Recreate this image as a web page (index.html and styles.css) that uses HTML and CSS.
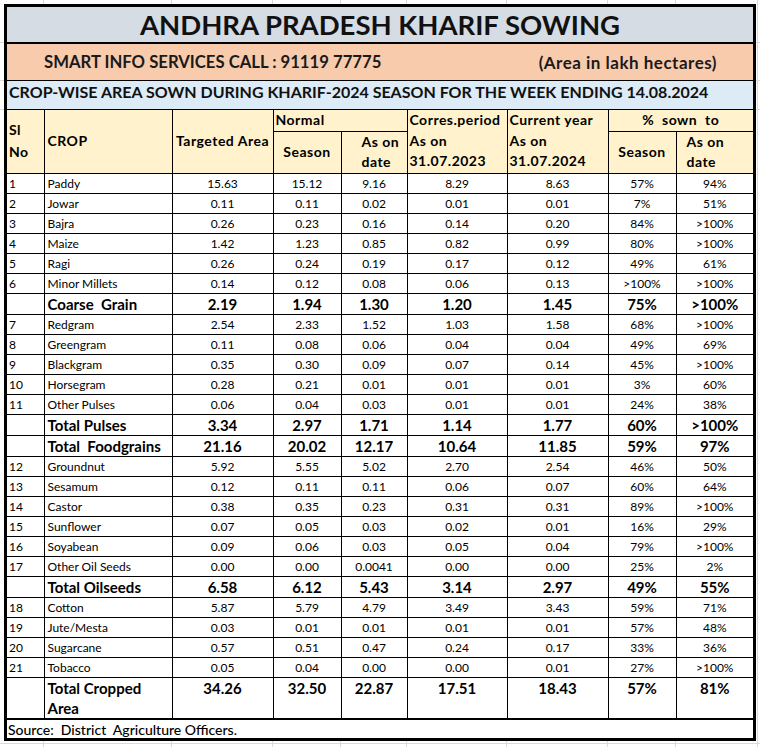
FILE: index.html
```html
<!DOCTYPE html>
<html lang="en">
<head>
<meta charset="utf-8">
<title>Andhra Pradesh Kharif Sowing</title>
<link rel="stylesheet" href="styles.css">
</head>
<body>
<div class="sheet">
  <div class="title">ANDHRA PRADESH KHARIF SOWING</div>
  <div class="info"><span>SMART INFO SERVICES CALL : 91119 77775</span><span class="area">(Area in lakh hectares)</span></div>
  <div class="subtitle">CROP-WISE AREA SOWN DURING KHARIF-2024 SEASON FOR THE WEEK ENDING 14.08.2024</div>
  <table class="grid">
    <colgroup>
      <col class="c-sl"><col class="c-crop"><col class="c-tgt"><col class="c-ns"><col class="c-nd"><col class="c-cor"><col class="c-cur"><col class="c-ps"><col class="c-pd">
    </colgroup>
    <thead>
      <tr class="h1">
        <th rowspan="2" class="left sl">Sl<br>No</th>
        <th rowspan="2" class="left crop">CROP</th>
        <th rowspan="2">Targeted Area</th>
        <th colspan="2" class="left normal">Normal</th>
        <th rowspan="2" class="left top">Corres.period<br>As on<br>31.07.2023</th>
        <th rowspan="2" class="left top">Current year<br>As on<br>31.07.2024</th>
        <th colspan="2">%&nbsp; sown&nbsp; to</th>
      </tr>
      <tr class="h2">
        <th>Season</th>
        <th class="left asd">As on<br>date</th>
        <th>Season</th>
        <th class="left asd2">As on<br>date</th>
      </tr>
    </thead>
    <tbody>
      <tr><td class="sl">1</td><td class="crop">Paddy</td><td>15.63</td><td>15.12</td><td>9.16</td><td>8.29</td><td>8.63</td><td>57%</td><td>94%</td></tr>
      <tr><td class="sl">2</td><td class="crop">Jowar</td><td>0.11</td><td>0.11</td><td>0.02</td><td>0.01</td><td>0.01</td><td>7%</td><td>51%</td></tr>
      <tr><td class="sl">3</td><td class="crop">Bajra</td><td>0.26</td><td>0.23</td><td>0.16</td><td>0.14</td><td>0.20</td><td>84%</td><td>&gt;100%</td></tr>
      <tr><td class="sl">4</td><td class="crop">Maize</td><td>1.42</td><td>1.23</td><td>0.85</td><td>0.82</td><td>0.99</td><td>80%</td><td>&gt;100%</td></tr>
      <tr><td class="sl">5</td><td class="crop">Ragi</td><td>0.26</td><td>0.24</td><td>0.19</td><td>0.17</td><td>0.12</td><td>49%</td><td>61%</td></tr>
      <tr><td class="sl">6</td><td class="crop">Minor Millets</td><td>0.14</td><td>0.12</td><td>0.08</td><td>0.06</td><td>0.13</td><td>&gt;100%</td><td>&gt;100%</td></tr>
      <tr class="total"><td class="sl"></td><td class="crop">Coarse&nbsp; Grain</td><td>2.19</td><td>1.94</td><td>1.30</td><td>1.20</td><td>1.45</td><td>75%</td><td>&gt;100%</td></tr>
      <tr><td class="sl">7</td><td class="crop">Redgram</td><td>2.54</td><td>2.33</td><td>1.52</td><td>1.03</td><td>1.58</td><td>68%</td><td>&gt;100%</td></tr>
      <tr><td class="sl">8</td><td class="crop">Greengram</td><td>0.11</td><td>0.08</td><td>0.06</td><td>0.04</td><td>0.04</td><td>49%</td><td>69%</td></tr>
      <tr><td class="sl">9</td><td class="crop">Blackgram</td><td>0.35</td><td>0.30</td><td>0.09</td><td>0.07</td><td>0.14</td><td>45%</td><td>&gt;100%</td></tr>
      <tr><td class="sl">10</td><td class="crop">Horsegram</td><td>0.28</td><td>0.21</td><td>0.01</td><td>0.01</td><td>0.01</td><td>3%</td><td>60%</td></tr>
      <tr><td class="sl">11</td><td class="crop">Other Pulses</td><td>0.06</td><td>0.04</td><td>0.03</td><td>0.01</td><td>0.01</td><td>24%</td><td>38%</td></tr>
      <tr class="total"><td class="sl"></td><td class="crop">Total Pulses</td><td>3.34</td><td>2.97</td><td>1.71</td><td>1.14</td><td>1.77</td><td>60%</td><td>&gt;100%</td></tr>
      <tr class="total"><td class="sl"></td><td class="crop">Total&nbsp; Foodgrains</td><td>21.16</td><td>20.02</td><td>12.17</td><td>10.64</td><td>11.85</td><td>59%</td><td>97%</td></tr>
      <tr><td class="sl">12</td><td class="crop">Groundnut</td><td>5.92</td><td>5.55</td><td>5.02</td><td>2.70</td><td>2.54</td><td>46%</td><td>50%</td></tr>
      <tr><td class="sl">13</td><td class="crop">Sesamum</td><td>0.12</td><td>0.11</td><td>0.11</td><td>0.06</td><td>0.07</td><td>60%</td><td>64%</td></tr>
      <tr><td class="sl">14</td><td class="crop">Castor</td><td>0.38</td><td>0.35</td><td>0.23</td><td>0.31</td><td>0.31</td><td>89%</td><td>&gt;100%</td></tr>
      <tr><td class="sl">15</td><td class="crop">Sunflower</td><td>0.07</td><td>0.05</td><td>0.03</td><td>0.02</td><td>0.01</td><td>16%</td><td>29%</td></tr>
      <tr><td class="sl">16</td><td class="crop">Soyabean</td><td>0.09</td><td>0.06</td><td>0.03</td><td>0.05</td><td>0.04</td><td>79%</td><td>&gt;100%</td></tr>
      <tr><td class="sl">17</td><td class="crop">Other Oil Seeds</td><td>0.00</td><td>0.00</td><td>0.0041</td><td>0.00</td><td>0.00</td><td>25%</td><td>2%</td></tr>
      <tr class="total"><td class="sl"></td><td class="crop">Total Oilseeds</td><td>6.58</td><td>6.12</td><td>5.43</td><td>3.14</td><td>2.97</td><td>49%</td><td>55%</td></tr>
      <tr><td class="sl">18</td><td class="crop">Cotton</td><td>5.87</td><td>5.79</td><td>4.79</td><td>3.49</td><td>3.43</td><td>59%</td><td>71%</td></tr>
      <tr><td class="sl">19</td><td class="crop">Jute/Mesta</td><td>0.03</td><td>0.01</td><td>0.01</td><td>0.01</td><td>0.01</td><td>57%</td><td>48%</td></tr>
      <tr><td class="sl">20</td><td class="crop">Sugarcane</td><td>0.57</td><td>0.51</td><td>0.47</td><td>0.24</td><td>0.17</td><td>33%</td><td>36%</td></tr>
      <tr><td class="sl">21</td><td class="crop">Tobacco</td><td>0.05</td><td>0.04</td><td>0.00</td><td>0.00</td><td>0.01</td><td>27%</td><td>&gt;100%</td></tr>
      <tr class="total grand"><td class="sl"></td><td class="crop">Total Cropped<br>Area</td><td>34.26</td><td>32.50</td><td>22.87</td><td>17.51</td><td>18.43</td><td>57%</td><td>81%</td></tr>
    </tbody>
  </table>
  <div class="source">Source:&nbsp; District&nbsp; Agriculture Officers.</div>
</div>
</body>
</html>
```

FILE: styles.css
```css
html {
  background-color: #fff;
  background-image:
    linear-gradient(#dadada, #dadada),
    linear-gradient(#dadada, #dadada),
    linear-gradient(#dadada, #dadada),
    linear-gradient(#dadada, #dadada),
    linear-gradient(#dadada, #dadada),
    linear-gradient(#dadada, #dadada),
    linear-gradient(#dadada, #dadada),
    linear-gradient(#dadada, #dadada),
    linear-gradient(#dadada, #dadada),
    linear-gradient(#dadada, #dadada),
    linear-gradient(#dadada, #dadada),
    linear-gradient(#dadada, #dadada),
    linear-gradient(#dadada, #dadada);
  background-repeat: no-repeat;
  background-size:
    1px 100%, 1px 100%, 1px 100%, 1px 100%, 1px 100%, 1px 100%, 1px 100%, 1px 100%, 1px 100%,
    100% 1px, 100% 1px, 100% 1px, 100% 1px;
  background-position:
    43px 0, 171px 0, 272px 0, 340px 0, 406px 0, 506px 0, 607px 0, 675px 0, 757px 0,
    0 42px, 0 80px, 0 109px, 0 743px;
  min-height: 100%;
}

body {
  margin: 0;
  padding: 4px 0 0 4px;
  font-family: Lato, "Open Sans", sans-serif;
  color: #000;
}

.sheet {
  width: 746px;
  border: 3px solid #000;
  background: #fff;
}

.title {
  height: 35px;
  background: #d6dce4;
  border-bottom: 2px solid #000;
  text-align: center;
  font-weight: 700;
  font-size: 27.5px;
  line-height: 36px;
  color: #111;
}

.info {
  height: 36px;
  background: #f8cbad;
  border-bottom: 1px solid #000;
  display: flex;
  justify-content: space-between;
  align-items: center;
  padding: 0 36px 0 37px;
  font-weight: 700;
  font-size: 16.7px;
  color: #1a1a1a;
}

.info .area {
  font-size: 17px;
  letter-spacing: 0.5px;
}

.subtitle {
  height: 28px;
  background: #ddebf7;
  border-bottom: 1px solid #000;
  padding-left: 2px;
  font-weight: 700;
  font-size: 16px;
  line-height: 22px;
  color: #111;
}

.grid {
  width: 746px;
  border-collapse: collapse;
  table-layout: fixed;
  border-style: hidden;
}

.c-sl { width: 37px; }
.c-crop { width: 128px; }
.c-tgt { width: 101px; }
.c-ns { width: 68px; }
.c-nd { width: 66px; }
.c-cor { width: 100px; }
.c-cur { width: 101px; }
.c-ps { width: 68px; }
.c-pd { width: 77px; }

.grid th, .grid td {
  border: 1px solid #000;
  padding: 0;
  text-align: center;
  white-space: nowrap;
  overflow: hidden;
}

.grid th {
  background: #fff2cc;
  font-weight: 700;
  font-size: 14px;
  letter-spacing: 0.5px;
  line-height: 20.5px;
  vertical-align: middle;
}

.grid .h1 th { height: 20px; }
.grid .h2 th { height: 41px; }

.grid th.left { text-align: left; }
.grid th.sl { padding-left: 2px; line-height: 22px; }
.grid th.crop { padding-left: 3px; }
.grid th.normal { padding-left: 2px; }
.grid th.top { vertical-align: top; padding-left: 2px; line-height: 20.6px; }
.grid th.asd { padding-left: 20px; }
.grid th.asd2 { padding-left: 10px; }

.grid td {
  height: 19px;
  font-size: 12px;
  line-height: 19px;
  vertical-align: middle;
}

.grid td.sl { text-align: left; padding-left: 2px; }
.grid td.crop { text-align: left; padding-left: 3px; }

.grid tr.total td {
  height: 20px;
  font-size: 15px;
  font-weight: 700;
  line-height: 20px;
}

.grid tr.grand td {
  height: 40px;
  vertical-align: top;
  line-height: 20px;
  white-space: normal;
}

.source {
  height: 18px;
  border-top: 2px solid #000;
  padding-left: 1px;
  font-size: 14px;
  line-height: 20px;
  font-weight: 500;
}
```
